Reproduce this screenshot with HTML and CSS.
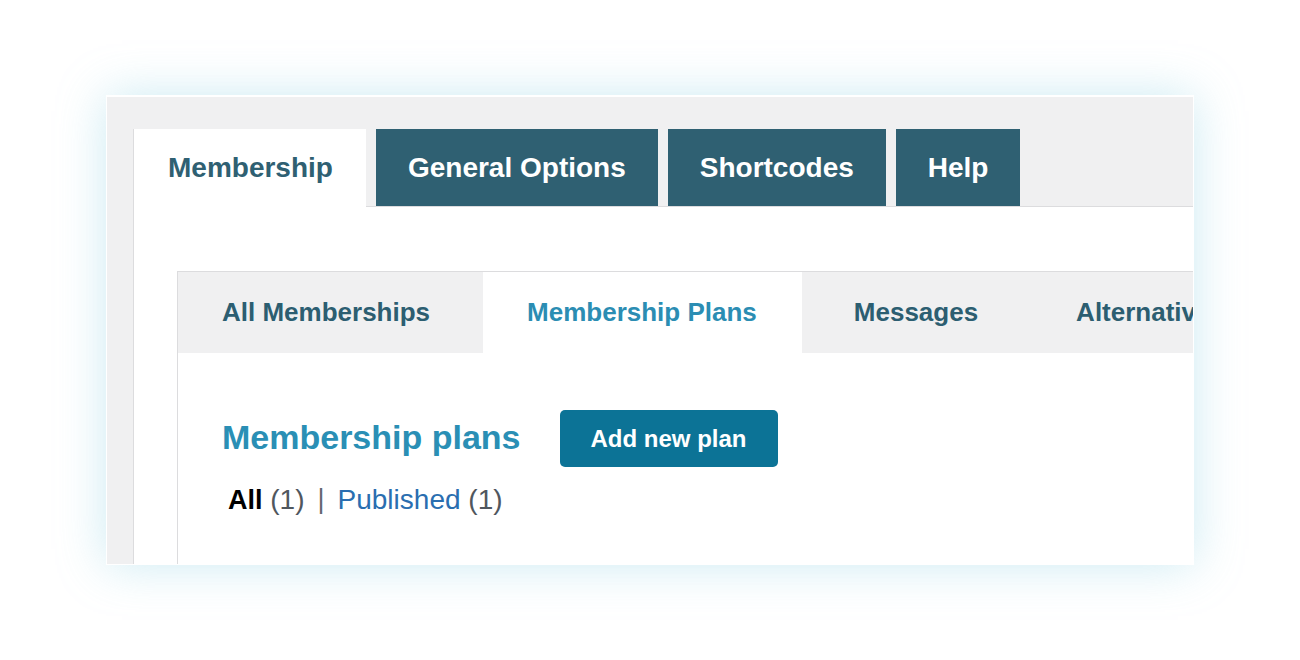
FILE: index.html
```html
<!DOCTYPE html>
<html>
	<head>
		<meta charset=utf-8>
		<meta name="viewport" content="width=device-width, initial-scale=1">
		<title>Membership plans</title>
		<link rel="stylesheet" href="styles.css">
	</head>
	<body>
		<div id="frame">
			<div class="wrap">
				<div class="nav-tabs">
					<div class="nav-tab active">Membership</div>
					<div class="nav-tab">General Options</div>
					<div class="nav-tab">Shortcodes</div>
					<div class="nav-tab">Help</div>
				</div>
				<div class="panel">
					<div class="box">
						<div class="sub-tabs">
							<div class="sub-tab">All Memberships</div>
							<div class="sub-tab active">Membership Plans</div>
							<div class="sub-tab">Messages</div>
							<div class="sub-tab">Alternative Content</div>
						</div>
						<div class="box-body">
							<div class="title-row">
								<h1>Membership plans</h1>
								<a class="button">Add new plan</a>
							</div>
							<ul class="subsubsub">
								<li><b>All</b> <span class="count">(1)</span></li>
								<li class="sep">|</li>
								<li><a>Published</a> <span class="count">(1)</span></li>
							</ul>
						</div>
					</div>
				</div>
			</div>
		</div>
	</body>
</html>
```

FILE: styles.css
```css
html, body { height: 100%; }
body {
	margin: 0; padding: 0;
	background: #fff;
	font-family: 'Liberation Sans', Arial, sans-serif;
}

#frame {
	width: 1086px; height: 467px;
	margin: 0 0 0 106px;
	position: relative; top: 95px;
	border: 1px solid #fff;
	border-top-width: 2px;
	background: #f0f0f1;
	overflow: hidden;
	box-shadow: 0 0 45px rgba(130, 205, 225, 0.4);
}
.wrap {
	padding: 32px 0 0 26px;
	width: 1300px;
}

.nav-tabs {
	display: flex;
	gap: 10px;
	border-bottom: 1px solid #dcdcde;
}
.nav-tab {
	height: 77px;
	padding: 0 32px;
	display: flex; align-items: center;
	font-size: 28px; font-weight: bold;
	color: #fff;
	background: #2f6072;
	margin-bottom: -1px;
}
.nav-tab.active {
	background: #fff;
	color: #2f6072;
	padding: 0 33px 0 34px;
	border-left: 1px solid #dcdcde;
	height: 78px;
}

.panel {
	background: #fff;
	border-left: 1px solid #dcdcde;
	padding: 64px 0 0 43px;
	height: 400px;
}
.box {
	border: 1px solid #dcdcde;
	border-right: none;
	height: 400px;
}

.sub-tabs {
	display: flex;
	background: #f0f0f1;
	height: 81px;
}
.sub-tab {
	display: flex; align-items: center;
	padding: 0 48px;
	font-size: 26px; font-weight: bold;
	color: #2c5e71;
	white-space: nowrap;
}
.sub-tab:first-child { padding-left: 44px; padding-right: 53px; }
.sub-tab.active {
	background: #fff;
	color: #2b8db3;
	padding: 0 45px 0 44px;
}
.sub-tab.active + .sub-tab { padding-left: 52px; padding-right: 50px; }

.box-body {
	padding: 55px 44px 0;
}
.title-row {
	display: flex; align-items: center;
	gap: 39px;
}
h1 {
	margin: 0;
	font-size: 34px; font-weight: bold;
	color: #2a8fb5;
}
.button {
	height: 57px;
	padding: 0 31px;
	display: flex; align-items: center;
	font-size: 24px; font-weight: bold;
	color: #fff;
	background: #0c7396;
	border-radius: 5px;
	margin-top: 2px;
}

.subsubsub {
	list-style: none;
	margin: 17px 0 0; padding: 0 0 0 6px;
	display: flex; gap: 13px;
	font-size: 28px;
	color: #50575e;
}
.subsubsub b { color: #000; font-size: 27px; }
.subsubsub a { color: #2a6eb0; }
.subsubsub .sep { color: #646970; font-size: 27px; }
```
